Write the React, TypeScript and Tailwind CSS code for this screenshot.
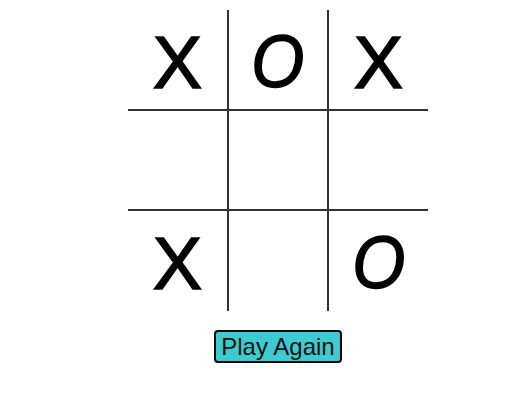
import { useState } from "react";

type Mark = "X" | "O" | null;

const START: Mark[] = ["X", "O", "X", null, null, null, "X", null, "O"];

export default function App() {
  const [cells, setCells] = useState<Mark[]>(START);

  return (
    <div className="w-[515px] h-[406px] bg-white font-['Liberation_Sans',Arial,sans-serif]">
      <div className="ml-[128px] pt-[10px] w-[300px] flex flex-col items-center">
        <div className="grid grid-cols-[101px_100px_99px] grid-rows-[101px_100px_100px] w-[300px]">
          {cells.map((mark, i) => {
            const col = i % 3;
            const row = Math.floor(i / 3);
            return (
              <div
                key={i}
                className={`box-border flex items-center justify-center border-[#333] ${
                  col < 2 ? "border-r-2" : ""
                } ${row < 2 ? "border-b-2" : ""}`}
              >
                {mark === "X" && (
                  <span className="text-[74px] leading-none text-black pt-[6px] [-webkit-text-stroke:1.5px_black]">
                    X
                  </span>
                )}
                {mark === "O" && (
                  <span className="text-[74px] leading-none text-black italic pt-[4px] scale-x-[0.92] [-webkit-text-stroke:1.5px_black]">
                    O
                  </span>
                )}
              </div>
            );
          })}
        </div>
        <button
          className="mt-[19px] px-[5px] py-[1px] text-[24px] leading-[27px] text-[#111] bg-[#3ccbd0] border-2 border-black rounded-[4px]"
          onClick={() => setCells(Array(9).fill(null))}
        >
          Play Again
        </button>
      </div>
    </div>
  );
}
